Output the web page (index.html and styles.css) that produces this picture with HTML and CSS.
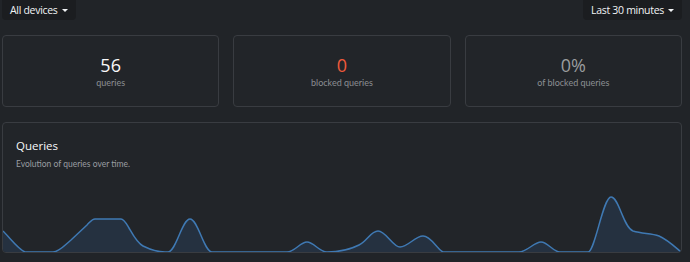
FILE: index.html
```html
<!DOCTYPE html>
<html>
<head>
    <title>Dashboard</title>
    <link rel="stylesheet" href="styles.css">
</head>
<body>
    <div class="page">
        <div class="toolbar">
            <button class="dropdown">All devices <span class="caret"></span></button>
            <button class="dropdown">Last 30 minutes <span class="caret"></span></button>
        </div>

        <!-- Stat cards -->
        <div class="stats">
            <div class="card stat">
                <div class="stat-value">56</div>
                <div class="stat-label">queries</div>
            </div>
            <div class="card stat">
                <div class="stat-value blocked">0</div>
                <div class="stat-label">blocked queries</div>
            </div>
            <div class="card stat">
                <div class="stat-value muted">0%</div>
                <div class="stat-label">of blocked queries</div>
            </div>
        </div>

        <!-- Queries chart -->
        <div class="card chart-card">
            <div class="chart-header">
                <div class="chart-title">Queries</div>
                <div class="chart-subtitle">Evolution of queries over time.</div>
            </div>
            <svg class="chart" viewBox="0 0 678 77" preserveAspectRatio="none">
                <path class="area" d="M0 56 C8 64 15 74 22 77 L50 77 C56 77 62 70 68 65 L84 50 C88 46 89 44 92 44 L118 44 C121 44 123 48 126 53 C130 60 134 68 140 71 C146 74 154 77 162 77 L165 77 C173 77 179 44 187 44 C195 44 201 77 209 77 L284 77 C292 77 297 67 304 67 C311 67 316 77 324 77 C335 77 348 74 356 70 C364 66 368 56 375 56 C383 56 390 72 397 72 C405 72 412 61 420 61 C428 61 434 74 440 77 L516 77 C524 77 531 67 538 67 C545 67 550 77 557 77 L585 77 C592 77 600 22 608 22 C616 22 620 52 630 56 C640 59 648 58 656 61 C665 65 672 72 678 77 L0 77 Z"/>
                <path class="line" d="M0 56 C8 64 15 74 22 77 L50 77 C56 77 62 70 68 65 L84 50 C88 46 89 44 92 44 L118 44 C121 44 123 48 126 53 C130 60 134 68 140 71 C146 74 154 77 162 77 L165 77 C173 77 179 44 187 44 C195 44 201 77 209 77 L284 77 C292 77 297 67 304 67 C311 67 316 77 324 77 C335 77 348 74 356 70 C364 66 368 56 375 56 C383 56 390 72 397 72 C405 72 412 61 420 61 C428 61 434 74 440 77 L516 77 C524 77 531 67 538 67 C545 67 550 77 557 77 L585 77 C592 77 600 22 608 22 C616 22 620 52 630 56 C640 59 648 58 656 61 C665 65 672 72 678 77"/>
            </svg>
        </div>
    </div>
</body>
</html>
```

FILE: styles.css
```css
body {
    margin: 0;
    background-color: #212428;
    font-family: "Open Sans", "Liberation Sans", sans-serif;
    color: #e9ecef;
}
.page {
    width: 680px;
    padding-left: 2px;
}
.toolbar {
    display: flex;
    justify-content: space-between;
    height: 20px;
    margin-bottom: 15px;
}
.dropdown {
    height: 20px;
    padding: 0 8px;
    border: none;
    border-radius: 0 0 4px 4px;
    background-color: #1b1d20;
    color: #f1f3f5;
    font-family: "Open Sans", sans-serif;
    font-size: 10.5px;
    letter-spacing: -0.3px;
    display: flex;
    align-items: center;
    gap: 4px;
}
.caret {
    width: 0;
    height: 0;
    border-left: 3px solid transparent;
    border-right: 3px solid transparent;
    border-top: 3px solid #f1f3f5;
}
.card {
    border: 1px solid #393c41;
    border-radius: 4px;
    background-color: #222529;
}
.stats {
    display: grid;
    grid-template-columns: repeat(3, 1fr);
    gap: 14px;
    margin-bottom: 15px;
}
.stat {
    height: 70px;
    display: flex;
    flex-direction: column;
    align-items: center;
    justify-content: center;
}
.stat-value {
    font-size: 18px;
    line-height: 22px;
    color: #f8f9fa;
}
.stat-value.blocked {
    color: #ef5a3b;
}
.stat-value.muted {
    color: #9a9c9f;
}
.stat-label {
    font-family: Lato, sans-serif;
    font-size: 9px;
    line-height: 13px;
    color: #8c8f93;
}
.chart-card {
    height: 129px;
    display: flex;
    flex-direction: column;
    overflow: hidden;
}
.chart-header {
    padding: 15px 13px 5px;
    height: 32px;
}
.chart-title {
    font-size: 11.5px;
    line-height: 16px;
    color: #f8f9fa;
}
.chart-subtitle {
    margin-top: 4px;
    font-family: Lato, sans-serif;
    font-size: 8.5px;
    line-height: 12px;
    color: #9a9da1;
}
.chart {
    display: block;
    width: 100%;
    height: 77px;
}
.area {
    fill: #253140;
}
.line {
    fill: none;
    stroke: #3f79b3;
    stroke-width: 1.5;
}
```
